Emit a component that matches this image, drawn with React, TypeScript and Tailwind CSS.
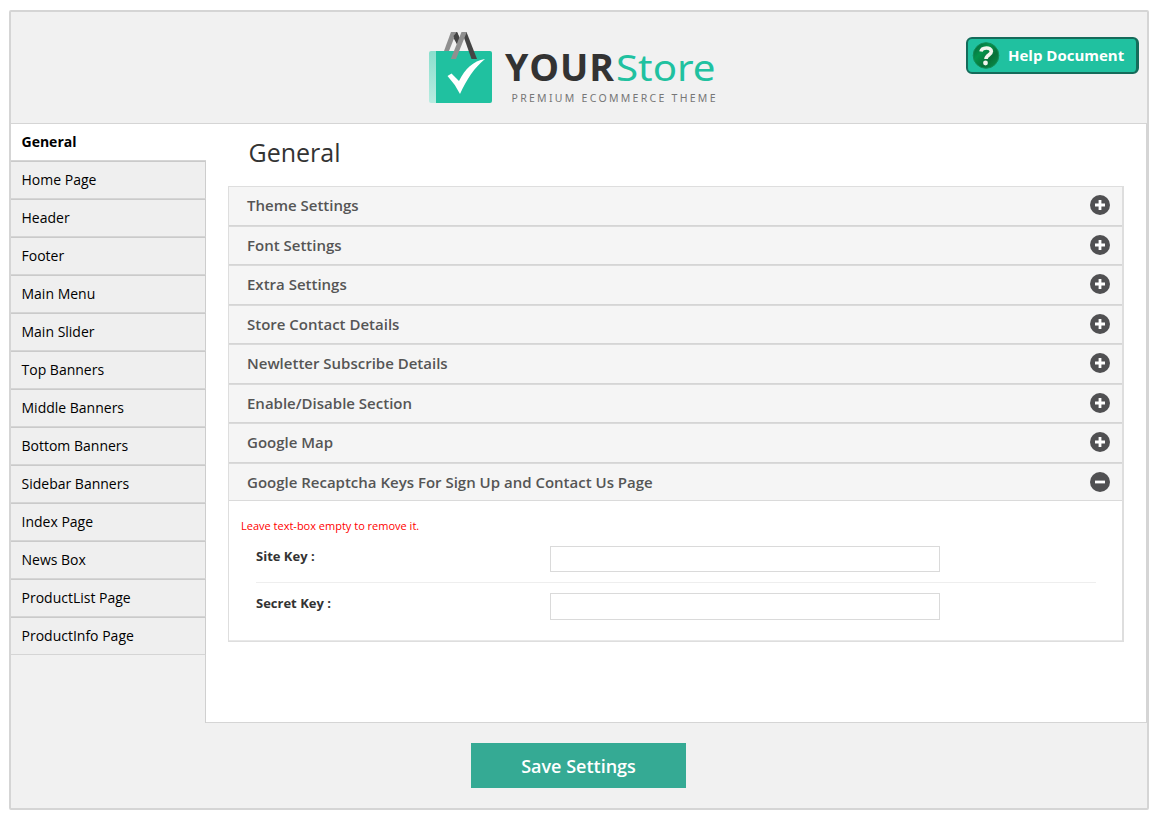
import React from "react";

const tabs = [
  "General",
  "Home Page",
  "Header",
  "Footer",
  "Main Menu",
  "Main Slider",
  "Top Banners",
  "Middle Banners",
  "Bottom Banners",
  "Sidebar Banners",
  "Index Page",
  "News Box",
  "ProductList Page",
  "ProductInfo Page",
];

const sections = [
  { title: "Theme Settings", height: "h-[39px]" },
  { title: "Font Settings", height: "h-[39px]" },
  { title: "Extra Settings", height: "h-10" },
  { title: "Store Contact Details", height: "h-[39px]" },
  { title: "Newletter Subscribe Details", height: "h-10" },
  { title: "Enable/Disable Section", height: "h-[39px]" },
  { title: "Google Map", height: "h-10" },
  { title: "Google Recaptcha Keys For Sign Up and Contact Us Page", height: "h-[38px]", open: true },
];

function Logo() {
  return (
    <svg width="300" height="80" viewBox="425 28 300 80" aria-label="YourStore">
      <defs>
        <linearGradient id="side" x1="0" y1="0" x2="0" y2="1">
          <stop offset="0" stopColor="#8adfcd" />
          <stop offset="1" stopColor="#b9ece1" />
        </linearGradient>
      </defs>
      <path d="M431 51H437V103H431Q429 103 429 101V53Q429 51 431 51Z" fill="url(#side)" />
      <path d="M436 51H490Q492 51 492 53V101Q492 103 490 103H436Z" fill="#20c1a0" />
      <path d="M452 32H457L461.500 42.500L459 48L453 37Z" fill="#444" />
      <path d="M451 32H456.500L449 51H444Z" fill="#8f8f8f" />
      <path d="M453.500 36L457 32L461.500 42.500L459 48Z" fill="#444" />
      <path d="M462 32H466.500L477 59H471.500Z" fill="#444" />
      <path d="M461.500 32H466.800L456 59H450.800Z" fill="#8f8f8f" />
      <path d="M447.500 76L451.500 73.500L459 81C465 69 473 61 485 59C474 68 467 79 460 94Q455 84 447.500 76Z" fill="#fff" />
      <text x="505" y="81" fontSize="37.500" fontWeight="680" fill="#333" textLength="109" lengthAdjust="spacing" className="font-['Open_Sans',sans-serif]">YOUR</text>
      <text x="616" y="81" fontSize="37" fontWeight="400" fill="#20c1a0" textLength="99.500" lengthAdjust="spacingAndGlyphs" className="font-['Noto_Sans',sans-serif]">Store</text>
      <text x="511.500" y="101.800" fontSize="10.500" fill="#777" textLength="204" lengthAdjust="spacing" className="font-['Noto_Sans',sans-serif]">PREMIUM ECOMMERCE THEME</text>
    </svg>
  );
}

function HelpIcon() {
  return (
    <svg width="28" height="28" viewBox="0 0 28 28" aria-hidden="true">
      <defs>
        <linearGradient id="help" x1="0" y1="0" x2="1" y2="1">
          <stop offset="0" stopColor="#075f3a" />
          <stop offset=".35" stopColor="#04934b" />
          <stop offset=".65" stopColor="#087039" />
          <stop offset="1" stopColor="#07954b" />
        </linearGradient>
      </defs>
      <circle cx="14" cy="13.500" r="12.800" fill="url(#help)" stroke="#138c57" />
      <path d="M9 9.500C9.800 5 19.200 4.600 19.400 9.300C19.400 13 14 13 14 17" fill="none" stroke="#f2f4ee" strokeWidth="3.600" />
      <circle cx="13.500" cy="21" r="2.400" fill="#f2f4ee" />
    </svg>
  );
}

function Toggle({ open }: { open?: boolean }) {
  return (
    <svg width="20" height="20" viewBox="0 0 20 20" aria-hidden="true" className={open ? "" : "-mt-[2px]"}>
      <circle cx="10" cy="10" r="10" fill="#505052" />
      <path d={open ? "M5 10H15" : "M5 10H15M10 5V15"} stroke="#fff" strokeWidth="2.800" />
    </svg>
  );
}

export default function App() {
  return (
    <div className="h-[820px] bg-white pl-[9px] pt-[10px] font-['Open_Sans',sans-serif]">
      <div className="flex h-[800px] w-[1140px] flex-col rounded-[2px] border-2 border-[#d5d5d5] bg-[#f1f1f1]">
        <header className="relative flex h-[111px] shrink-0 pl-[414px] pt-4">
          <Logo />
          <button className="absolute right-[8px] top-[25px] flex h-[37px] w-[173px] items-center rounded-[6px] border-2 border-r-[3px] border-[#156b5a] bg-[#20c1a0] pl-[4px] text-[15px] font-bold text-white">
            <HelpIcon />
            <span className="ml-2 whitespace-nowrap">Help Document</span>
          </button>
        </header>

        <div className="flex h-[600px] shrink-0">
          <div className="flex w-[195px] shrink-0 flex-col">
            <nav>
              {tabs.map((tab, i) => (
                <a
                  key={tab}
                  className={
                    i === 0
                      ? "flex h-[38px] items-center border-y border-[#d5d5d5] bg-white pl-[10.500px] text-sm font-bold text-black"
                      : "flex h-[38px] items-center border-y border-r border-b-[#d5d5d5] border-r-[#cdcdcd] border-t-[#cacaca] bg-[#efefef] pl-[10.500px] text-sm text-black"
                  }
                >
                  {tab}
                </a>
              ))}
            </nav>
            <div className="flex-1 border-r border-[#d0d0d0]" />
          </div>

          <main className="w-[941px] border-y border-r border-[#d5d5d5] bg-white pl-[22px]">
            <h1 className="h-[62px] pl-[20.500px] pt-[10px] text-[25px] leading-9 text-[#333]">General</h1>
            <div className="w-[896px] border border-r-2 border-[#dedede]">
              {sections.map((s, i) => (
                <div
                  key={s.title}
                  className={`${s.height} flex items-center justify-between border-b bg-[#f5f5f5] pl-[18px] pr-3 text-[15px] font-semibold text-[#555] ${
                    i === 0 ? "border-b-[#d5d5d5]" : s.open ? "border-t border-b-[#dadada] border-t-[#dadada]" : "border-t border-b-[#d5d5d5] border-t-[#dadada]"
                  }`}
                >
                  <span className={s.open ? "" : "-mt-px"}>{s.title}</span>
                  <Toggle open={s.open} />
                </div>
              ))}
              <div className="h-[140px] border-b border-[#e8e8e8] pl-3 pr-[26px] pt-[17px]">
                <p className="text-[11px] leading-4 text-[#f00]">Leave text-box empty to remove it.</p>
                <div className="ml-[15px]">
                  <label className="flex h-[49px] border-b border-[#eee] pt-[12px] text-[13px] font-bold text-[#333]">
                    <span className="w-[294px] leading-5">Site Key :</span>
                    <input className="h-[26px] w-[390px] border border-[#dadada] bg-white" />
                  </label>
                  <label className="flex pt-[10px] text-[13px] font-bold text-[#333]">
                    <span className="w-[294px] leading-5">Secret Key :</span>
                    <input className="h-[27px] w-[390px] border border-[#dadada] bg-white" />
                  </label>
                </div>
              </div>
            </div>
          </main>
        </div>

        <div className="flex justify-center pr-[1px] pt-[20px]">
          <button className="h-[45px] w-[215px] bg-[#35aa94] text-lg font-semibold text-white">Save Settings</button>
        </div>
      </div>
    </div>
  );
}
